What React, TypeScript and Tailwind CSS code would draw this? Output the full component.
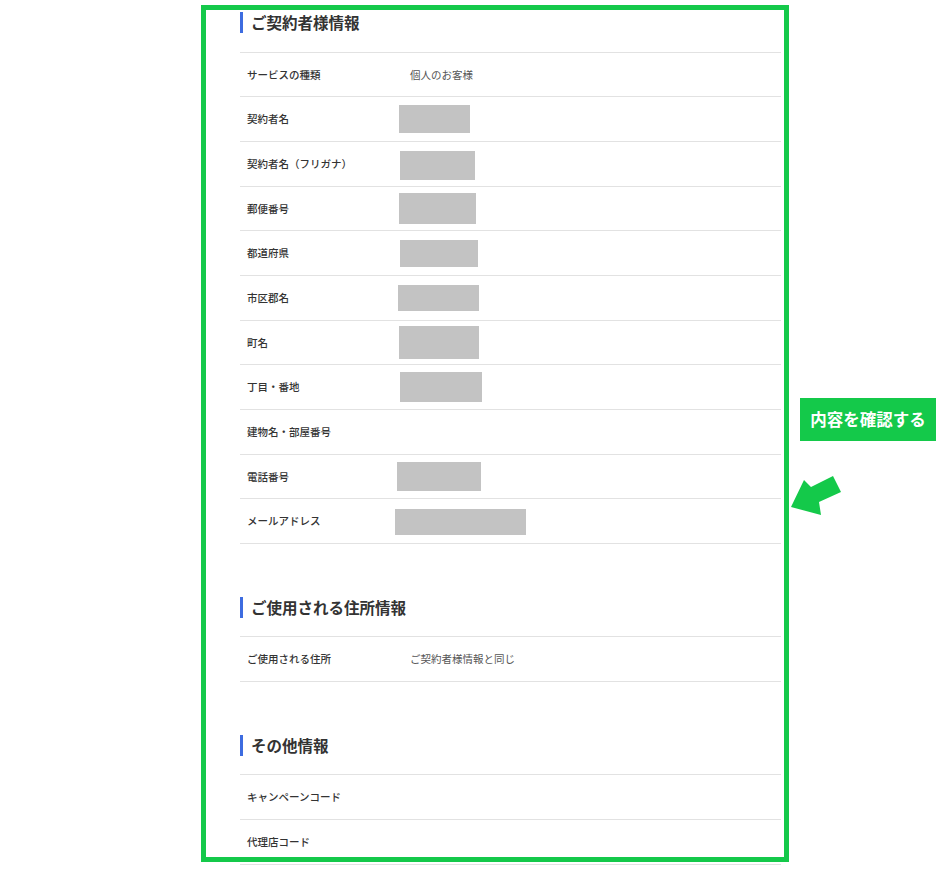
type Row = {
  label: string
  value?: string
  mask?: string
  h: string
}

const contractRows: Row[] = [
  { label: 'サービスの種類', value: '個人のお客様', h: 'h-[44px]' },
  { label: '契約者名', mask: '-ml-[11px] w-[71px] h-[28px]', h: 'h-[45px]' },
  { label: '契約者名（フリガナ）', mask: '-ml-[10px] w-[75px] h-[29px] mt-[2px]', h: 'h-[45px]' },
  { label: '郵便番号', mask: '-ml-[11px] w-[77px] h-[31px]', h: 'h-[44px]' },
  { label: '都道府県', mask: '-ml-[10px] w-[78px] h-[27px]', h: 'h-[45px]' },
  { label: '市区郡名', mask: '-ml-[12px] w-[81px] h-[26px]', h: 'h-[45px]' },
  { label: '町名', mask: '-ml-[11px] w-[80px] h-[33px]', h: 'h-[44px]' },
  { label: '丁目・番地', mask: '-ml-[10px] w-[82px] h-[30px]', h: 'h-[45px]' },
  { label: '建物名・部屋番号', h: 'h-[45px]' },
  { label: '電話番号', mask: '-ml-[13px] w-[84px] h-[29px]', h: 'h-[44px]' },
  { label: 'メールアドレス', mask: '-ml-[15px] w-[131px] h-[26px] mt-[2px]', h: 'h-[45px]' },
]

const addressRows: Row[] = [
  { label: 'ご使用される住所', value: 'ご契約者様情報と同じ', h: 'h-[45px]' },
]

const otherRows: Row[] = [
  { label: 'キャンペーンコード', h: 'h-[45px]' },
  { label: '代理店コード', h: 'h-[45px]' },
]

function Section({ title, rows, space }: { title: string; rows: Row[]; space: string }) {
  return (
    <section className={space}>
      <h2 className="border-l-[3px] border-[#3d6ce0] pl-[8px] h-[21px] leading-[21px] text-[15.5px] font-bold text-[#333]">
        {title}
      </h2>
      <div className="border-t border-[#e2e2e2]">
        {rows.map((row) => (
          <div key={row.label} className={`flex items-center border-b border-[#e2e2e2] ${row.h}`}>
            <div className="w-[170px] pl-[7px] text-[10.5px] font-medium text-[#333] shrink-0">{row.label}</div>
            <div className="flex-1 flex items-center text-[10.5px] text-[#555]">
              {row.value}
              {row.mask && <div className={`bg-[#c3c3c3] ${row.mask}`} />}
            </div>
          </div>
        ))}
      </div>
    </section>
  )
}

export default function App() {
  return (
    <div className="relative w-[947px] min-h-[869px] bg-white font-['Noto_Sans_CJK_JP','Noto_Sans',sans-serif]">
      <div className="pl-[240px] pt-[12px] w-[781px]">
        <Section title="ご契約者様情報" rows={contractRows} space="[&>h2]:mb-[19px]" />
        <Section title="ご使用される住所情報" rows={addressRows} space="mt-[53px] [&>h2]:mb-[18px]" />
        <Section title="その他情報" rows={otherRows} space="mt-[53px] [&>h2]:mb-[18px]" />
      </div>

      {/* annotation overlay */}
      <div className="absolute left-[201px] top-[5px] w-[588px] h-[857px] border-[5px] border-[#14c94a]" />
      <div className="absolute left-[800px] top-[398px] w-[136px] h-[43px] bg-[#14c94a] flex items-center justify-center text-white font-bold text-[16.5px]">
        内容を確認する
      </div>
      <svg className="absolute left-[785px] top-[470px]" width="65" height="50" viewBox="785 470 65 50">
        <polygon
          points="791,507 804,480 811,487 833,476 841,492 819,502 821,515"
          fill="#14c94a"
        />
      </svg>
    </div>
  )
}
